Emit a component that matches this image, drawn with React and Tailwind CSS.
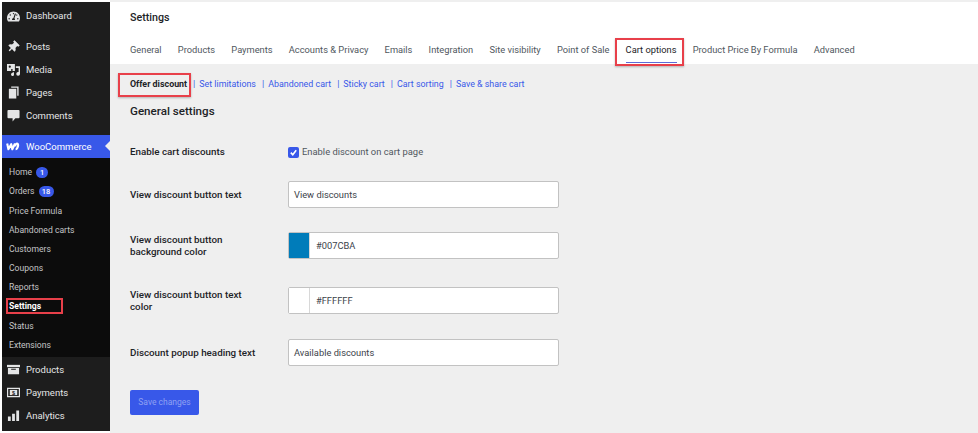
import { FaTachometerAlt, FaThumbtack } from 'react-icons/fa'

const tabs = ['General', 'Products', 'Payments', 'Accounts & Privacy', 'Emails', 'Integration', 'Site visibility', 'Point of Sale', 'Cart options', 'Product Price By Formula', 'Advanced']
const subLinks = ['Set limitations', 'Abandoned cart', 'Sticky cart', 'Cart sorting', 'Save & share cart']
const subMenu = ['Price Formula', 'Abandoned carts', 'Customers', 'Coupons', 'Reports', 'Settings', 'Status', 'Extensions']

function MediaIcon() {
  return (
    <svg viewBox="0 0 14 14" className="h-[13px] w-[13px]" fill="currentColor">
      <path d="M0 1h8.5v7.5H6V6.5H4.5V8.5H0z" />
      <circle cx="3" cy="4" r="1.2" fill="#1d1d1d" />
      <path d="M9.5 3.5H14v8.2a2 2 0 1 1-1.5-1.9V5.5h-3z" />
      <path d="M6 10h1.5v2.2a1.6 1.6 0 1 1-1.5-1.4z" />
    </svg>
  )
}

function PagesIcon() {
  return (
    <svg viewBox="0 0 14 14" className="h-[13px] w-[13px]" fill="currentColor">
      <path d="M4.5 0.5H12.5V10.5H11V2H4.5z" />
      <path d="M2 3h8v10.5H2z" />
    </svg>
  )
}

function CommentIcon() {
  return (
    <svg viewBox="0 0 14 14" className="h-[13px] w-[13px]" fill="currentColor">
      <path d="M1.5 1h11a1 1 0 0 1 1 1v7a1 1 0 0 1-1 1H9l-3 3.5V10H1.5a1 1 0 0 1-1-1V2a1 1 0 0 1 1-1z" />
    </svg>
  )
}

function ArchiveIcon() {
  return (
    <svg viewBox="0 0 14 14" className="h-[13px] w-[13px]" fill="currentColor">
      <path d="M0 2h14v2.5H0z" />
      <path fillRule="evenodd" d="M1 5.3h12V12H1zM4.5 6.3v1h5v-1z" />
    </svg>
  )
}

function PaymentsIcon() {
  return (
    <svg viewBox="0 0 14 14" className="h-[13px] w-[13px]" fill="currentColor">
      <path fillRule="evenodd" d="M0 2h14v10H0zM1.3 3.3v7.4h11.4V3.3z" />
      <rect x="3" y="4.2" width="8" height="5.6" />
      <text x="7" y="9.3" textAnchor="middle" fontSize="6" fontWeight="700" fill="#1d1d1d" fontFamily="Liberation Sans, sans-serif">$</text>
    </svg>
  )
}

function BarsIcon() {
  return (
    <svg viewBox="0 0 14 14" className="h-[13px] w-[13px]" fill="currentColor">
      <path d="M1 8h3v5H1zM5.5 5h3v8h-3zM10 1.5h3V13h-3z" />
    </svg>
  )
}

function WooIcon() {
  return (
    <svg viewBox="0 0 14 9" className="h-[9px] w-[14px]" fill="none" stroke="currentColor" strokeWidth="2.1" strokeLinejoin="round">
      <path d="M1.2 1.5 2.4 7.2 5.2 2.2 6.3 7.2 9 1.5" />
      <path d="M9.6 7.2c2.4 0 3.4-5.7 1.6-5.7-1.5 0-1.8 1.4-2 2.8" />
    </svg>
  )
}

function MenuRow({ icon, label }) {
  return (
    <div className="flex h-[23px] items-center gap-[6px] pl-[4px] text-[#e4e5e6]">
      <span className="flex w-[14px] justify-center">{icon}</span>
      <span className="pt-[1px]">{label}</span>
    </div>
  )
}

function Badge({ children, className }) {
  return (
    <span className={`flex h-[11px] items-center justify-center rounded-full bg-[#3858e9] text-[7.5px] font-medium text-white ${className}`}>
      {children}
    </span>
  )
}

function SubRow({ children, active }) {
  return (
    <div className={`relative flex h-[19.2px] items-center gap-[4px] pl-[7px] ${active ? 'font-bold text-white' : 'text-[#c3c4c6]'}`}>
      {children}
      {active && <span className="absolute left-[4px] top-[1px] h-[16px] w-[57px] border-2 border-[#e8404a]" />}
    </div>
  )
}

function Sidebar() {
  return (
    <aside className="my-[2px] w-[108px] shrink-0 bg-[#1d1d1d] text-[9.5px]">
      <div className="flex h-[28px] items-center gap-[6px] pl-[4px] text-[#e4e5e6]">
        <span className="flex w-[14px] justify-center"><FaTachometerAlt className="text-[13px]" /></span>
        <span className="pt-[1px]">Dashboard</span>
      </div>
      <div className="mt-[5px]">
        <MenuRow icon={<FaThumbtack className="rotate-45 text-[12px]" />} label="Posts" />
        <MenuRow icon={<MediaIcon />} label="Media" />
        <MenuRow icon={<PagesIcon />} label="Pages" />
        <MenuRow icon={<CommentIcon />} label="Comments" />
      </div>
      <div className="relative mt-[8px] flex h-[23px] items-center gap-[6px] bg-[#3858e9] pl-[4px] text-white">
        <span className="flex w-[14px] justify-center"><WooIcon /></span>
        <span className="pt-[1px]">WooCommerce</span>
        <span className="absolute right-0 top-[6px] h-0 w-0 border-y-[5px] border-r-[5px] border-y-transparent border-r-[#efefef]" />
      </div>
      <div className="bg-[#0c0c0c] pb-[2px] pt-[5px] text-[8.6px]">
        <SubRow>Home <Badge className="w-[12px]">1</Badge></SubRow>
        <SubRow>Orders <Badge className="w-[15px]">18</Badge></SubRow>
        {subMenu.map((item) => (
          <SubRow key={item} active={item === 'Settings'}>{item}</SubRow>
        ))}
      </div>
      <div className="pt-[1px]">
        <MenuRow icon={<ArchiveIcon />} label="Products" />
        <MenuRow icon={<PaymentsIcon />} label="Payments" />
        <MenuRow icon={<BarsIcon />} label="Analytics" />
      </div>
    </aside>
  )
}

function Field({ label, children, className }) {
  return (
    <div className={`flex items-center ${className}`}>
      <div className="w-[158px] text-[9.8px] font-medium leading-[12px] text-[#1d2327]">{label}</div>
      {children}
    </div>
  )
}

function TextBox({ value }) {
  return (
    <div className="flex h-[27px] w-[271px] items-center rounded-[2px] border border-[#c2c2c2] bg-white pl-[5px] text-[9.3px] text-[#3c434a]">
      {value}
    </div>
  )
}

function ColorBox({ swatch, value }) {
  return (
    <div className="flex h-[27px] w-[271px] items-stretch rounded-[2px] border border-[#c2c2c2] bg-white text-[9.3px] text-[#3c434a]">
      <span className={`w-[21px] border-r border-[#d8d8d8] ${swatch}`} />
      <span className="flex items-center pl-[6px]">{value}</span>
    </div>
  )
}

export default function App() {
  return (
    <div className="flex h-[433px] w-[978px] overflow-hidden bg-white pl-[2px] font-['Roboto',sans-serif]">
      <Sidebar />
      <main className="min-w-0 flex-1 bg-[#efefef] pt-[2px]">
        <header className="h-[62px] bg-white pl-[20px]">
          <h1 className="pt-[9px] text-[10.7px] font-medium leading-[14px] text-[#1d2327]">Settings</h1>
          <nav className="mt-[15px] flex gap-[16.2px] text-[9.3px] text-[#50575e]">
            {tabs.map((tab) => (
              <div key={tab} className={`relative h-[24px] whitespace-nowrap pt-[3px] ${tab === 'Cart options' ? 'text-[#1d2327]' : ''}`}>
                {tab}
                {tab === 'Cart options' && (
                  <>
                    <span className="absolute inset-x-0 bottom-[1px] h-[1.5px] bg-[#5b6cd8]" />
                    <span className="absolute bottom-[-2px] left-[-11px] right-[-7px] top-[-2px] border-2 border-[#e8404a] shadow-[0_1px_2px_rgba(0,0,0,0.25)]" />
                  </>
                )}
              </div>
            ))}
          </nav>
        </header>

        <div className="pl-[20px]">
          <div className="mt-[13px] flex items-center text-[8.9px] leading-[14px]">
            <span className="relative mr-[6px] font-bold text-[#1d2327]">
              Offer discount
              <span className="absolute bottom-[-6px] left-[-12px] right-[-4px] top-[-4px] border-2 border-[#e8404a] shadow-[0_1px_2px_rgba(0,0,0,0.25)]" />
            </span>
            {subLinks.map((link) => (
              <span key={link} className="mr-[6px] flex gap-[4px] text-[#3858e9]">
                <span>|</span>
                <span>{link}</span>
              </span>
            ))}
          </div>
          <h2 className="mt-[13px] text-[11.6px] font-medium leading-[14px] text-[#1d2327]">General settings</h2>

          <Field label="Enable cart discounts" className="mt-[27px] h-[14px]">
            <div className="flex items-center gap-[3px] text-[9.4px] text-[#50575e]">
              <span className="flex h-[11px] w-[11px] items-center justify-center rounded-[2px] bg-[#3858e9]">
                <svg viewBox="0 0 10 10" className="h-[9px] w-[9px]" fill="none" stroke="white" strokeWidth="1.8">
                  <path d="M2 5.2 4.2 7.5 8 2.5" />
                </svg>
              </span>
              Enable discount on cart page
            </div>
          </Field>
          <Field label="View discount button text" className="mt-[22px]"><TextBox value="View discounts" /></Field>
          <Field label={<>View discount button<br />background color</>} className="mt-[24px]"><ColorBox swatch="bg-[#007cba]" value="#007CBA" /></Field>
          <Field label={<>View discount button text<br />color</>} className="mt-[28px]"><ColorBox swatch="bg-white" value="#FFFFFF" /></Field>
          <Field label="Discount popup heading text" className="mt-[25px]"><TextBox value="Available discounts" /></Field>

          <button className="mt-[24px] flex h-[25px] w-[69px] items-center justify-center rounded-[2px] bg-[#3858e9] text-[8.5px] text-[#8fa0f2]">
            Save changes
          </button>
        </div>
      </main>
    </div>
  )
}
